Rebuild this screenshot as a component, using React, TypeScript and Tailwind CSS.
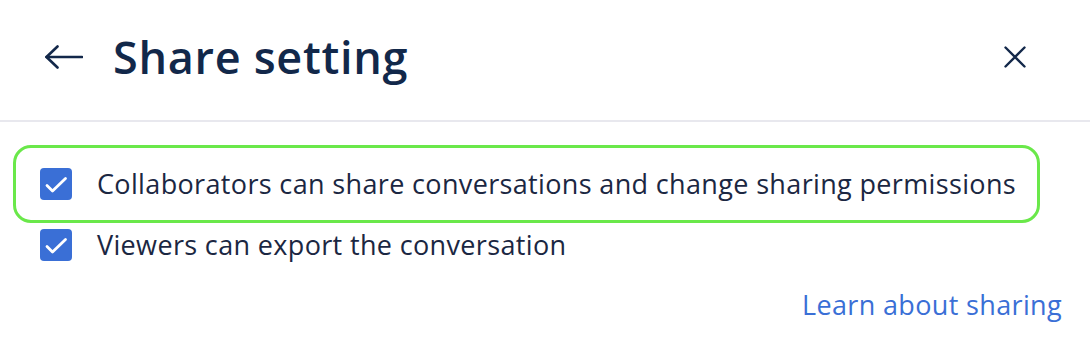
import React from "react";

function Check() {
  return (
    <div className="w-[32px] h-[32px] rounded-[4px] bg-[#3a6fd6] shrink-0">
      <svg width="32" height="32" viewBox="0 0 32 32" fill="none">
        <path d="M7 17.5 L12.5 23 L25.5 10.5" stroke="white" strokeWidth="2.8" strokeLinecap="round" strokeLinejoin="round" />
      </svg>
    </div>
  );
}

export default function App() {
  return (
    <div className="w-[1090px] h-[346px] bg-white overflow-hidden" style={{ fontFamily: "'Open Sans', Lato, sans-serif" }}>
      <div className="h-[122px] border-b-2 border-[#e8e8ee] flex items-center pl-[45px] pr-[64px] pb-[6px]">
        <svg width="38" height="24" viewBox="0 0 38 24" fill="none" className="shrink-0">
          <path d="M1.5 12 H37" stroke="#13284a" strokeWidth="2.6" strokeLinecap="round" />
          <path d="M12.5 1.5 L1.5 12 L12.5 22.5" stroke="#13284a" strokeWidth="2.6" strokeLinecap="round" strokeLinejoin="round" />
        </svg>
        <h1 className="ml-[30px] text-[45px] font-semibold text-[#12284a] tracking-[0.7px]">Share setting</h1>
        <div className="flex-1" />
        <svg width="22" height="22" viewBox="0 0 22 22" fill="none">
          <path d="M1.5 1.5 L20.5 20.5 M20.5 1.5 L1.5 20.5" stroke="#13284a" strokeWidth="2.4" strokeLinecap="round" />
        </svg>
      </div>
      <div className="pl-[13px] pt-[23px]">
        <div className="w-[1027px] h-[78px] border-[3px] border-[#6ae84a] rounded-[18px] flex items-center pl-[24px]">
          <Check />
          <span className="ml-[25px] text-[27px] text-[#1b2742] tracking-[0.35px]">Collaborators can share conversations and change sharing permissions</span>
        </div>
        <div className="flex items-center pl-[27px] mt-[2px]">
          <Check />
          <span className="ml-[25px] text-[27px] text-[#1b2742] tracking-[0.35px]">Viewers can export the conversation</span>
        </div>
      </div>
      <div className="flex justify-end pr-[28px] mt-[19px]">
        <span className="text-[27px] text-[#3a6fd6] tracking-[0.35px]">Learn about sharing</span>
      </div>
    </div>
  );
}
